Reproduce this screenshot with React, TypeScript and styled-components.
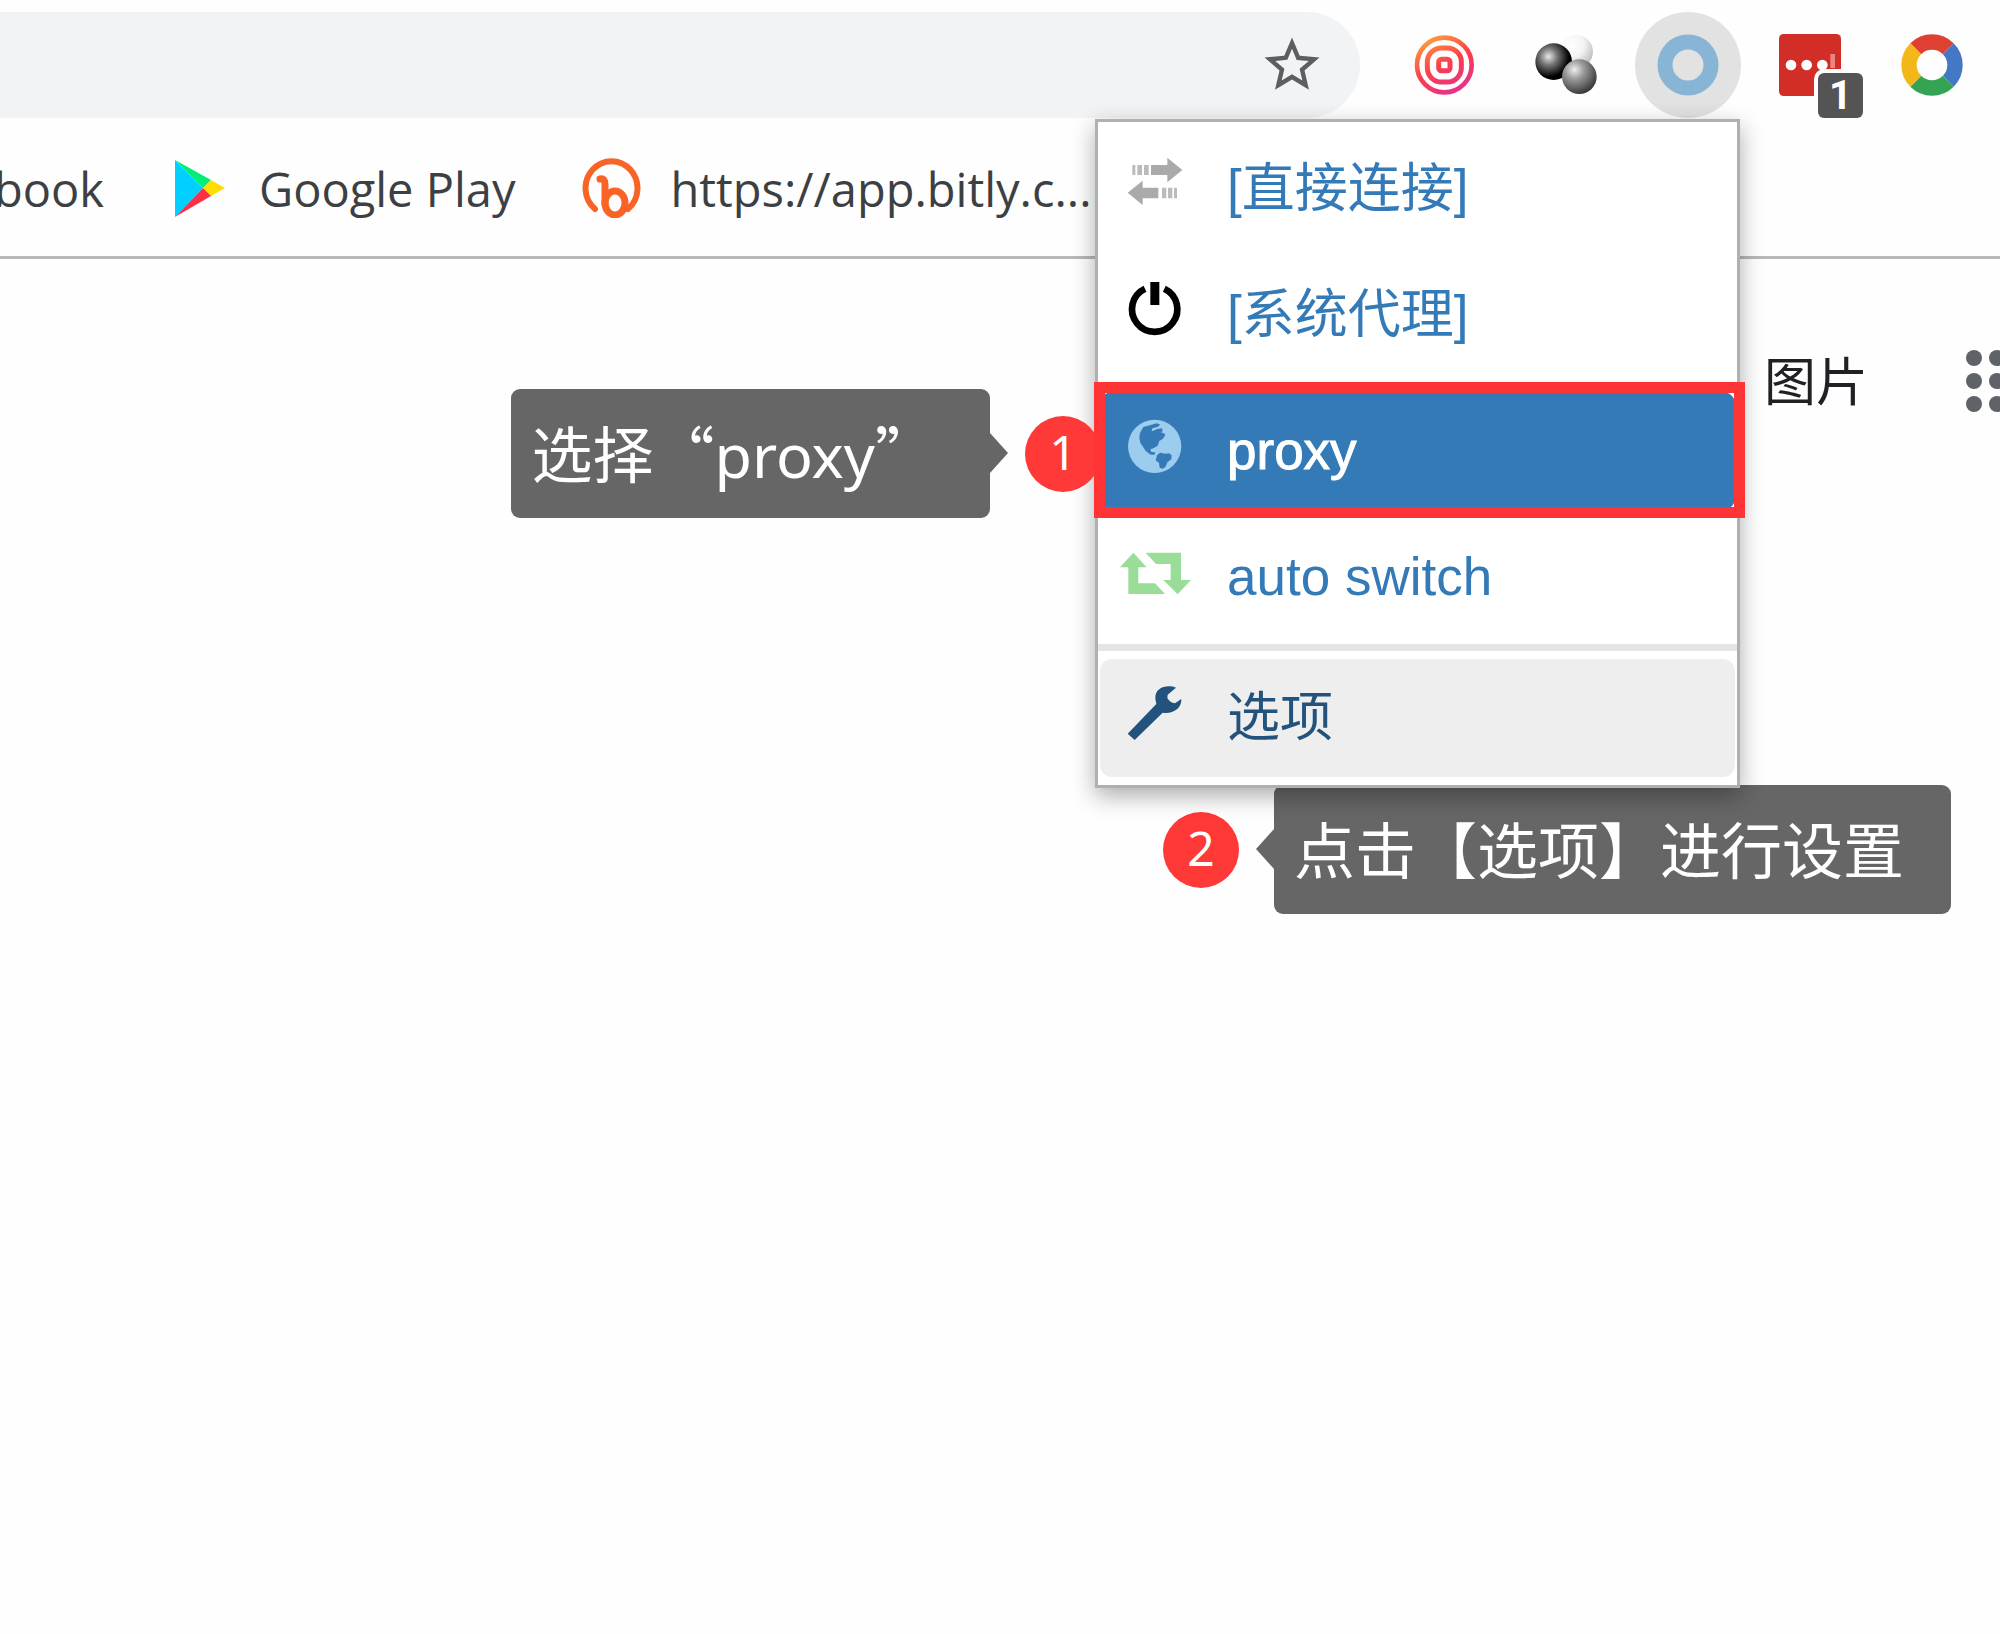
import React from "react";
import styled, { createGlobalStyle } from "styled-components";

const GlobalStyle = createGlobalStyle`
  *, *::before, *::after { box-sizing: border-box; }
  body {
    margin: 0;
    background: #fefefe;
    color: #202124;
    overflow-x: hidden;
    font-family: "Liberation Sans", "Noto Sans CJK SC", sans-serif;
  }
  svg { display: block; flex: none; }
  a { text-decoration: none; }
  button { border: 0; padding: 0; background: none; cursor: pointer; }
`;

const Page = styled.div`
  position: relative;
  min-height: 100vh;
  overflow: hidden;
`;

/* ---------- browser chrome ---------- */

const Toolbar = styled.header`
  display: flex;
  align-items: center;
  gap: 31px;
  padding: 12px 15px 1px 0;
`;

const Omnibox = styled.div`
  flex: 1;
  display: flex;
  align-items: center;
  height: 106px;
  padding-right: 35px;
  border-radius: 0 53px 53px 0;
  background: #f1f3f4;
`;

const Address = styled.input`
  flex: 1;
  min-width: 0;
  height: 100%;
  border: 0;
  outline: 0;
  background: transparent;
  font-size: 48px;
`;

const Extensions = styled.div`
  display: flex;
  gap: 16px;
`;

const ExtensionButton = styled.button<{ $active?: boolean }>`
  position: relative;
  display: grid;
  place-items: center;
  width: 106px;
  height: 106px;
  border-radius: 50%;
  background: ${(p) => (p.$active ? "#e2e2e2" : "transparent")};
`;

const Badge = styled.span`
  position: absolute;
  right: 0;
  bottom: 0;
  width: 45px;
  height: 45px;
  border-radius: 6px;
  background: #545454;
  box-shadow: 0 0 0 4px #fefefe;
  color: #fff;
  font: bold 40px/46px Roboto, sans-serif;
  text-align: center;
`;

const Bookmarks = styled.nav`
  display: flex;
  align-items: center;
  gap: 66px;
  height: 140px;
  border-bottom: 3px solid #b8b8b8;
`;

const Bookmark = styled.a<{ $cut?: boolean }>`
  display: flex;
  align-items: center;
  justify-content: flex-end;
  gap: 29px;
  width: ${(p) => (p.$cut ? "104px" : "auto")};
  overflow: hidden;
  color: #3c4043;
  font: 47px/64px "Open Sans", "Noto Sans", sans-serif;
  white-space: nowrap;
`;

const BookmarkTitle = styled.span`
  padding-top: 2px;
`;

const PageHeader = styled.div`
  display: flex;
  justify-content: flex-end;
  align-items: center;
  gap: 98px;
  padding-top: 86px;
`;

const ImagesLink = styled.a`
  padding-bottom: 4px;
  color: #202124;
  font: 52px/68px "Noto Sans CJK SC", sans-serif;
`;

/* ---------- extension popup ---------- */

const PopupAnchor = styled.div`
  position: absolute;
  top: 119px;
  right: 260px;
  width: 645px;
`;

const Menu = styled.ul`
  position: relative;
  margin: 0;
  padding: 8px 2px;
  border: 3px solid #b0b0b0;
  background: #fff;
  list-style: none;
  box-shadow: 0 8px 22px rgba(0, 0, 0, 0.32);
`;

const MenuItem = styled.li`
  position: relative;
  & + & { margin-top: 8px; }
`;

const ProfileItem = styled(MenuItem)`
  && { margin-top: 18px; }
`;

const tones = {
  link: ["transparent", "#337ab7"],
  active: ["#337ab7", "#fff"],
  hover: ["#eee", "#23527c"],
};

const MenuLink = styled.a<{ $tone?: keyof typeof tones }>`
  display: flex;
  align-items: center;
  gap: 35px;
  height: 118px;
  padding-left: 18px;
  border-radius: 12px;
  background: ${(p) => tones[p.$tone ?? "link"][0]};
  color: ${(p) => tones[p.$tone ?? "link"][1]};
  font-size: 53px;
  line-height: 60px;
  -webkit-text-stroke: ${(p) => (p.$tone === "active" ? "1px #fff" : "0")};

  svg { margin-bottom: 12px; }
`;

const Divider = styled.li`
  height: 7px;
  margin: 8px -2px;
  background: #e5e5e5;
`;

/* ---------- annotations ---------- */

const Frame = styled.div`
  position: absolute;
  inset: -10px -10px -8px -6px;
  border: 11px solid #ff3434;
  pointer-events: none;
`;

const Note = styled.div<{ $side: "left" | "right" }>`
  position: absolute;
  display: flex;
  flex-direction: ${(p) => (p.$side === "left" ? "row" : "row-reverse")};
  align-items: center;
  gap: 35px;
  ${(p) =>
    p.$side === "left"
      ? "right: 100%; top: -3px; margin-right: -1px;"
      : "left: 68px; top: 666px;"}
`;

const Bubble = styled.div<{ $side: "left" | "right" }>`
  position: relative;
  height: 129px;
  padding: 0 ${(p) => (p.$side === "left" ? "54px" : "47px")} 0 20px;
  border-radius: 9px;
  background: #666;
  color: #fff;
  font: 61px/126px "Noto Sans CJK SC", sans-serif;
  white-space: nowrap;

  &::after {
    content: "";
    position: absolute;
    top: 44px;
    ${(p) => (p.$side === "left" ? "left: 100%" : "right: 100%")};
    border: 20px solid transparent;
    border-width: 20px 18px;
    ${(p) => (p.$side === "left" ? "border-left-color" : "border-right-color")}: #666;
    ${(p) => (p.$side === "left" ? "border-right" : "border-left")}: 0;
  }
`;

const Latin = styled.span`
  font-family: "Noto Sans", sans-serif;
`;

const Step = styled.span`
  width: 76px;
  height: 76px;
  border-radius: 50%;
  background: #ff3838;
  color: #fff;
  font: 48px/72px "Noto Sans", sans-serif;
  text-align: center;
`;

/* ---------- drawings ---------- */

const StarIcon = () => (
  <svg width="66" height="66" viewBox="0 0 24 24" fill="#5a5f64">
    <path d="M22 9.24l-7.19-.62L12 2 9.19 8.63 2 9.24l5.46 4.73L5.82 21 12 17.27 18.18 21l-1.63-7.03L22 9.24zM12 15.4l-3.76 2.27 1-4.28-3.32-2.88 4.38-.38L12 6.1l1.71 4.04 4.38.38-3.32 2.88 1 4.28L12 15.4z" />
  </svg>
);

const TargetIcon = () => (
  <svg width="62" height="62" viewBox="0 0 186 186" fill="none" stroke="url(#sunset)">
    <defs>
      <linearGradient id="sunset" gradientUnits="userSpaceOnUse" x1="40" y1="10" x2="130" y2="180">
        <stop offset="0" stopColor="#ffa03c" />
        <stop offset="0.5" stopColor="#fb3f4a" />
        <stop offset="1" stopColor="#e8308c" />
      </linearGradient>
    </defs>
    <circle cx="94" cy="93" r="82" strokeWidth="14" />
    <rect x="43" y="42" width="102" height="102" rx="42" strokeWidth="15" />
    <rect x="77" y="76" width="34" height="34" rx="8" strokeWidth="15" />
  </svg>
);

const SpheresIcon = () => (
  <svg width="62" height="62" viewBox="0 0 186 186">
    <defs>
      <radialGradient id="pale" cx="0.35" cy="0.3" r="0.75">
        <stop offset="0" stopColor="#fff" />
        <stop offset="0.5" stopColor="#f4f4f4" />
        <stop offset="1" stopColor="#bcbcbc" />
      </radialGradient>
      <radialGradient id="dark" cx="0.36" cy="0.36" r="0.62">
        <stop offset="0" stopColor="#e8e8e8" />
        <stop offset="0.4" stopColor="#707070" />
        <stop offset="0.9" stopColor="#000" />
      </radialGradient>
      <radialGradient id="grey" cx="0.36" cy="0.3" r="0.7">
        <stop offset="0" stopColor="#eee" />
        <stop offset="0.4" stopColor="#999" />
        <stop offset="1" stopColor="#3c3c3c" />
      </radialGradient>
    </defs>
    <circle cx="124" cy="53" r="50" fill="url(#pale)" />
    <circle cx="56" cy="83" r="55" fill="url(#dark)" />
    <circle cx="133" cy="128" r="52" fill="url(#grey)" />
  </svg>
);

const RingIcon = () => (
  <svg width="62" height="62" viewBox="0 0 62 62">
    <circle cx="31" cy="31" r="23" fill="none" stroke="#88b5d6" strokeWidth="15" />
  </svg>
);

const DotsIcon = () => (
  <svg width="62" height="62" viewBox="0 0 186 186" fill="#fff">
    <rect width="186" height="186" rx="14" fill="#d32d27" />
    <circle cx="36" cy="93" r="16" />
    <circle cx="83" cy="93" r="16" />
    <circle cx="130" cy="93" r="16" />
    <rect x="154" y="60" width="14" height="42" fill="#e98682" />
  </svg>
);

const ColorWheelIcon = () => (
  <svg width="62" height="62" viewBox="0 0 186 186" fill="none" strokeWidth="46">
    <path d="M44.2 44.2A69 69 0 0 1 141.8 44.2" stroke="#de4132" />
    <path d="M141.8 44.2A69 69 0 0 1 141.8 141.8" stroke="#4478c4" />
    <path d="M141.8 141.8A69 69 0 0 1 44.2 141.8" stroke="#34a353" />
    <path d="M44.2 141.8A69 69 0 0 1 44.2 44.2" stroke="#f4b71a" />
  </svg>
);

const PlayIcon = () => (
  <svg width="60" height="60" viewBox="0 0 60 60">
    <path d="M5 2L33 30L5 59Z" fill="#00d0ff" />
    <path d="M5 2L41 22L33 30Z" fill="#00ee76" />
    <path d="M41 22L55 30L41 38L33 30Z" fill="#ffdd00" />
    <path d="M33 30L41 38L5 59Z" fill="#fb3048" />
  </svg>
);

const BitlyIcon = () => (
  <svg width="60" height="60" viewBox="0 0 60 60" fill="none" stroke="#f96426" strokeWidth="6" strokeLinecap="round">
    <path d="M13 51A26 27 0 1 1 46 51" />
    <path d="M18 21Q23 20 23 26V46" strokeWidth="7" />
    <ellipse cx="33" cy="45" rx="10" ry="12" strokeWidth="7" />
  </svg>
);

const AppsIcon = () => (
  <svg width="34" height="62" viewBox="0 0 34 62" fill="#5f6368">
    {[8, 31, 54].map((y) => [8, 31].map((x) => <circle key={`${x}-${y}`} cx={x} cy={y} r="8" />))}
  </svg>
);

const Glyph = ({ color, children }: { color: string; children: React.ReactNode }) => (
  <svg width="74" height="60" viewBox="0 0 222 180" fill={color}>
    {children}
  </svg>
);

const TransferGlyph = () => (
  <Glyph color="#aaa">
    <path d="M99 36H148V14L193 51L148 88V66H99Z" />
    <path d="M43 36h9v30h-9zM58 36h14v30h-14zM78 36h14v30h-14z" opacity="0.8" />
    <path d="M121 104H74V83L29 119L74 156V136H121Z" />
    <path d="M132 104h13v32h-13zM150 104h13v32h-13zM168 104h9v32h-9z" opacity="0.8" />
  </Glyph>
);

const PowerGlyph = () => (
  <Glyph color="#000">
    <path d="M81 29A68 68 0 1 0 139 29" fill="none" stroke="#000" strokeWidth="20" />
    <path d="M97 9H124V78H97Z" />
  </Glyph>
);

const GlobeGlyph = () => (
  <Glyph color="#9cccee">
    <circle cx="110" cy="94" r="80" />
    <path
      fill="#337ab7"
      d="M66 54L76 36L98 30L116 25L127 29L118 36L103 40L101 49L110 46L118 42L132 40L134 48L128 52L138 55L142 60L134 72L124 78L119 92L106 100L97 103L100 111L112 112L109 119L98 119L83 108L74 94L67 84L64 68Z"
    />
    <path fill="#337ab7" d="M117 121L126 113L143 116L153 115L161 121L160 133L148 142L143 155L134 161L125 158L123 144L113 136Z" />
  </Glyph>
);

const RetweetGlyph = () => (
  <Glyph color="#99dd99">
    <path d="M6 79L46 35L86 79H61V127H111L141 159H31V79Z" />
    <path d="M83 35H189V117H219L179 160L136 117H158V69H114Z" />
  </Glyph>
);

const WrenchGlyph = () => (
  <Glyph color="#23527c">
    <path d="M29 155L50 174L134 92C162 97 192 80 190 51L171 64Q156 62 148 48L149 38L174 17C150 7 110 14 112 50L115 66Z" />
  </Glyph>
);

export default function App() {
  return (
    <Page lang="zh-CN">
      <GlobalStyle />
      <Toolbar>
        <Omnibox>
          <Address type="text" aria-label="地址栏" />
          <button type="button" aria-label="收藏">
            <StarIcon />
          </button>
        </Omnibox>
        <Extensions>
          <ExtensionButton type="button" aria-label="Target"><TargetIcon /></ExtensionButton>
          <ExtensionButton type="button" aria-label="Spheres"><SpheresIcon /></ExtensionButton>
          <ExtensionButton type="button" aria-label="Proxy" $active><RingIcon /></ExtensionButton>
          <ExtensionButton type="button" aria-label="Passwords">
            <DotsIcon />
            <Badge>1</Badge>
          </ExtensionButton>
          <ExtensionButton type="button" aria-label="Colors"><ColorWheelIcon /></ExtensionButton>
        </Extensions>
      </Toolbar>

      <Bookmarks>
        <Bookmark href="#book" $cut>
          <BookmarkTitle>book</BookmarkTitle>
        </Bookmark>
        <Bookmark href="#play">
          <PlayIcon />
          <BookmarkTitle>Google Play</BookmarkTitle>
        </Bookmark>
        <Bookmark href="#bitly">
          <BitlyIcon />
          <BookmarkTitle>https://app.bitly.c...</BookmarkTitle>
        </Bookmark>
      </Bookmarks>

      <PageHeader>
        <ImagesLink href="#images">图片</ImagesLink>
        <button type="button" aria-label="应用">
          <AppsIcon />
        </button>
      </PageHeader>

      <PopupAnchor>
        <Note $side="right">
          <Bubble $side="right">点击【选项】进行设置</Bubble>
          <Step>2</Step>
        </Note>
        <Menu>
          <MenuItem>
            <MenuLink href="#direct"><TransferGlyph />[直接连接]</MenuLink>
          </MenuItem>
          <MenuItem>
            <MenuLink href="#system"><PowerGlyph />[系统代理]</MenuLink>
          </MenuItem>
          <ProfileItem>
            <MenuLink href="#proxy" $tone="active"><GlobeGlyph />proxy</MenuLink>
            <Note $side="left">
              <Bubble $side="left">选择“<Latin>proxy</Latin>”</Bubble>
              <Step>1</Step>
            </Note>
            <Frame />
          </ProfileItem>
          <MenuItem>
            <MenuLink href="#auto"><RetweetGlyph />auto switch</MenuLink>
          </MenuItem>
          <Divider role="separator" />
          <MenuItem>
            <MenuLink href="#options" $tone="hover"><WrenchGlyph />选项</MenuLink>
          </MenuItem>
        </Menu>
      </PopupAnchor>
    </Page>
  );
}
